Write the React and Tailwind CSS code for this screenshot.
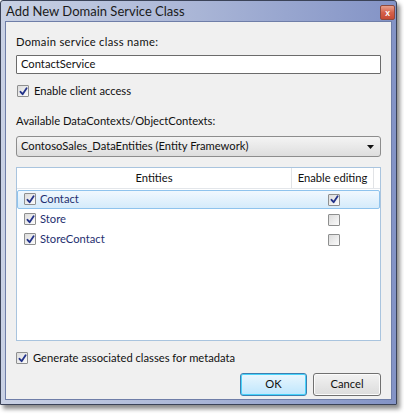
import React from 'react';

const font = { fontFamily: 'Lato, "Noto Sans", sans-serif' };

function CheckBox({ checked }) {
    return (
        <span className="inline-flex w-[12px] h-[12px] shrink-0 items-center justify-center border border-[#8e8f8f] bg-gradient-to-br from-[#dcdcdc] to-[#fbfbfb] rounded-[1px]">
            {checked && (
                <svg width="9" height="9" viewBox="0 0 9 9">
                    <path d="M1.5 4.8 L3.6 7.2 L7.6 1.2" fill="none" stroke="#23338a" strokeWidth="1.8" strokeLinecap="round" strokeLinejoin="round" />
                </svg>
            )}
        </span>
    );
}

const rows = [
    { name: 'Contact', edit: true, selected: true },
    { name: 'Store', edit: false },
    { name: 'StoreContact', edit: false },
];

export default function App() {
    return (
        <div className="w-[404px] h-[414px] bg-white text-[11.2px] text-[#111]" style={font}>
            <div className="w-[397px] h-[405px] flex flex-col border border-[#3b4358] bg-gradient-to-r from-[#c9d1e4] via-[#a9b5d6] to-[#8393c6] shadow-[3px_4px_4px_rgba(0,0,0,0.45)] rounded-t-[3px]">
                {/* title bar */}
                <div className="h-[20px] flex items-center justify-between pl-[5px] pr-[1px]">
                    <span className="text-[13px] text-[#1a1a1a] pt-[1px]">Add New Domain Service Class</span>
                    <div className="w-[15px] h-[15px] mt-[2px] flex items-center justify-center rounded-[2px] border border-[#8d4a3e] bg-gradient-to-b from-[#e8a08c] via-[#d5614a] to-[#c84a33]">
                        <span className="text-white text-[9px] font-bold leading-none">x</span>
                    </div>
                </div>
                {/* client */}
                <div className="flex-1 mx-[4px] mb-[4px] border border-[#6f7ea8] bg-[#f0f0f0] flex flex-col px-[10px] pt-[12px]">
                    <div className="h-[16px] leading-[16px] tracking-[0.3px]">Domain service class name:</div>
                    <div className="mt-[5px] h-[19px] border border-[#6b6b6b] bg-white rounded-[1px] flex items-center px-[4px]">
                        ContactService
                    </div>
                    <div className="mt-[9px] flex items-center gap-[5px] pl-[1px] h-[16px]">
                        <CheckBox checked />
                        <span>Enable client access</span>
                    </div>
                    <div className="mt-[14px] h-[16px] leading-[16px]">Available DataContexts/ObjectContexts:</div>
                    <div className="mt-[7px] h-[21px] border border-[#8d8d8d] rounded-[3px] bg-gradient-to-b from-[#f4f4f4] to-[#dedede] flex items-center justify-between pl-[4px] pr-[6px]">
                        <span>ContosoSales_DataEntities (Entity Framework)</span>
                        <svg width="7" height="4" viewBox="0 0 7 4"><path d="M0 0 H7 L3.5 4 Z" fill="#111" /></svg>
                    </div>
                    {/* list */}
                    <div className="mt-[10px] h-[174px] border border-[#a9c4de] bg-white flex flex-col">
                        <div className="h-[21px] flex border-b border-[#e3e6ea]">
                            <div className="w-[275px] flex items-center justify-center border-r border-[#e1e3e6] pt-[1px]">Entities</div>
                            <div className="w-[82px] flex items-center justify-center border-r border-[#e1e3e6] pt-[1px]">Enable editing</div>
                            <div className="flex-1" />
                        </div>
                        {rows.map((r) => (
                            <div
                                key={r.name}
                                className={`h-[19px] mt-[1px] flex items-center text-[#1f2f70] ${r.selected ? 'border border-[#8fc3ed] rounded-[2px] bg-gradient-to-b from-[#f1f8fe] to-[#d5ebfb]' : 'border border-transparent'}`}
                            >
                                <div className="w-[275px] flex items-center gap-[4px] pl-[6px]">
                                    <CheckBox checked />
                                    <span>{r.name}</span>
                                </div>
                                <div className="w-[82px] flex items-center justify-center">
                                    <CheckBox checked={r.edit} />
                                </div>
                            </div>
                        ))}
                    </div>
                    <div className="mt-[9px] flex items-center gap-[5px] h-[16px]">
                        <CheckBox checked />
                        <span>Generate associated classes for metadata</span>
                    </div>
                    <div className="mt-[7px] flex justify-end gap-[6px]">
                        <div className="w-[67px] h-[23px] rounded-[3px] border border-[#3c7fb1] bg-gradient-to-b from-[#eaf6fd] to-[#bee6fd] shadow-[inset_0_0_0_1px_#48d3fb] flex items-center justify-center">OK</div>
                        <div className="w-[68px] h-[23px] rounded-[3px] border border-[#707070] bg-gradient-to-b from-[#f2f2f2] to-[#dcdcdc] shadow-[inset_0_0_0_1px_#fbfbfb] flex items-center justify-center">Cancel</div>
                    </div>
                </div>
            </div>
        </div>
    );
}
